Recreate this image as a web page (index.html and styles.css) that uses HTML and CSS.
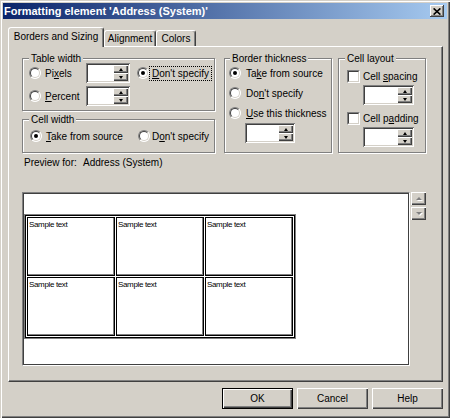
FILE: index.html
```html
<!DOCTYPE html>
<html>
<head>
<meta charset="utf-8">
<link rel="stylesheet" href="styles.css">
</head>
<body>
<div class="window">
  <div class="titlebar">
    <span class="title">Formatting element 'Address (System)'</span>
    <span class="close"><svg width="8" height="7" viewBox="0 0 8 7"><path d="M0.6 0.4 L7.4 6.6 M7.4 0.4 L0.6 6.6" stroke="#000" stroke-width="1.6" fill="none"/></svg></span>
  </div>
  <div class="tabs">
    <div class="tab active">Borders and Sizing</div>
    <div class="tab tab-align">Alignment</div>
    <div class="tab tab-colors">Colors</div>
  </div>
  <div class="panel">
    <div class="groups">
      <div class="col-left">
        <fieldset class="grp grp-tw">
          <legend class="lg6">Table width</legend>
          <div class="tw-body">
            <div class="row">
              <div class="opt w57"><span class="radio"></span><span>Pi<u>x</u>els</span></div>
              <div class="spin w44"><div class="field"></div><div class="sbs"><span class="sb up"></span><span class="sb dn"></span></div></div>
              <div class="opt opt-ds"><span class="radio on"></span><span class="focus"><u>D</u>on't specify</span></div>
            </div>
            <div class="row">
              <div class="opt w57"><span class="radio"></span><span><u>P</u>ercent</span></div>
              <div class="spin w44"><div class="field"></div><div class="sbs"><span class="sb up"></span><span class="sb dn"></span></div></div>
            </div>
          </div>
        </fieldset>
        <fieldset class="grp grp-cw">
          <legend class="lg6">Cell width</legend>
          <div class="cw-body">
            <div class="row">
              <div class="opt w108"><span class="radio on"></span><span><u>T</u>ake from source</span></div>
              <div class="opt opt-cw2"><span class="radio"></span><span>D<u>o</u>n't specify</span></div>
            </div>
          </div>
        </fieldset>
      </div>
      <fieldset class="grp grp-bt">
        <legend class="lg5">Border thickness</legend>
        <div class="bt-body">
          <div class="row"><div class="opt opt-bt"><span class="radio on"></span><span>Ta<u>k</u>e from source</span></div></div>
          <div class="row"><div class="opt opt-bt"><span class="radio"></span><span>Do<u>n</u>'t specify</span></div></div>
          <div class="row"><div class="opt opt-bt"><span class="radio"></span><span><u>U</u>se this thickness</span></div></div>
          <div class="spin w50 spin-bt"><div class="field"></div><div class="sbs"><span class="sb up"></span><span class="sb dn"></span></div></div>
        </div>
      </fieldset>
      <fieldset class="grp grp-cl">
        <legend class="lg6">Cell layout</legend>
        <div class="cl-body">
          <div class="crow"><span class="check"></span><span>Cell <u>s</u>pacing</span></div>
          <div class="spin w51 spin-cl"><div class="field"></div><div class="sbs"><span class="sb up"></span><span class="sb dn"></span></div></div>
          <div class="crow"><span class="check"></span><span>Cell p<u>a</u>dding</span></div>
          <div class="spin w51 spin-cl"><div class="field"></div><div class="sbs"><span class="sb up"></span><span class="sb dn"></span></div></div>
        </div>
      </fieldset>
    </div>
    <div class="preview-label"><span class="pl-key">Preview for:</span><span>Address (System)</span></div>
    <div class="preview-row">
      <div class="preview">
        <div class="ptable">
          <div class="pcell">Sample text</div>
          <div class="pcell">Sample text</div>
          <div class="pcell">Sample text</div>
          <div class="pcell">Sample text</div>
          <div class="pcell">Sample text</div>
          <div class="pcell">Sample text</div>
        </div>
      </div>
      <div class="scroll">
        <span class="scb"><span class="tri-up"></span></span>
        <span class="scb"><span class="tri-dn"></span></span>
      </div>
    </div>
  </div>
  <div class="buttons">
    <button class="btn btn-default">OK</button>
    <button class="btn">Cancel</button>
    <button class="btn">Help</button>
  </div>
</div>
</body>
</html>
```
FILE: styles.css
```css
* { box-sizing: border-box; }
html, body { margin: 0; padding: 0; background: #D4D0C8; }
body { font: 10px "Liberation Sans", Arial, sans-serif; color: #000; }
u { text-decoration: underline; text-underline-offset: 1px; }

.window {
  width: 450px; height: 418px; background: #D4D0C8; padding: 3px;
  display: flex; flex-direction: column;
  box-shadow: inset 1px 1px 0 #D4D0C8, inset 2px 2px 0 #fff, inset -1px -1px 0 #404040, inset -2px -2px 0 #808080;
}

.titlebar {
  height: 16px; flex: none;
  background: linear-gradient(to right, #0A246A, #A6CAF0);
  display: flex; align-items: center; justify-content: space-between;
  padding: 0 3px 0 1px;
}
.title { color: #fff; font-weight: bold; font-size: 11px; line-height: 16px; white-space: nowrap; }
.close {
  width: 14px; height: 12px; background: #D4D0C8;
  display: flex; align-items: center; justify-content: center;
  box-shadow: inset -1px -1px 0 #404040, inset 1px 1px 0 #fff, inset -2px -2px 0 #808080;
}

.tabs { display: flex; align-items: flex-end; height: 19px; margin: 8px 0 0 5px; flex: none; }
.tab {
  height: 16px; background: #D4D0C8;
  border: 1px solid; border-bottom: none;
  border-color: #fff #404040 transparent #fff;
  border-radius: 3px 3px 0 0;
  box-shadow: inset -1px 0 0 #808080;
  display: flex; align-items: center; justify-content: center;
  white-space: nowrap;
}
.tab.active { width: 96px; height: 20px; margin-bottom: -1px; position: relative; z-index: 1; padding-bottom: 2px; }
.tab-align { width: 52px; }
.tab-colors { width: 40px; }

.panel {
  margin-left: 5px; width: 435px; height: 336px; flex: none;
  border: 1px solid; border-color: #fff #404040 #404040 #fff;
  box-shadow: inset -1px -1px 0 #808080;
  padding: 7px 0 0 13px;
}

.groups { display: flex; align-items: stretch; }
.col-left { width: 193px; display: flex; flex-direction: column; gap: 4px; }

.grp {
  margin: 0; padding: 0; min-width: 0;
  border: 1px solid #808080;
  box-shadow: 1px 1px 0 #fff, inset 1px 1px 0 #fff;
}
.grp legend { padding: 0 2px; line-height: 9px; background: #D4D0C8; white-space: nowrap; }
.lg6 { margin-left: 6px; }
.lg5 { margin-left: 5px; }
.grp-bt { width: 108px; margin-left: 9px; }
.grp-cl { width: 88px; margin-left: 6px; }

.row { display: flex; align-items: center; height: 20px; }
.opt { display: flex; align-items: center; gap: 4px; white-space: nowrap; }
.w57 { width: 57px; }
.w108 { width: 108px; }
.opt-ds { margin-left: 7px; gap: 1px; }
.opt-cw2 { gap: 2px; }
.opt-bt { gap: 5px; }
.focus { outline: 1px dotted #000; outline-offset: 0; padding: 0 2px; line-height: 13px; }

.tw-body { padding: 0 0 4px 6px; display: flex; flex-direction: column; gap: 3px; }
.cw-body { padding: 2px 0 6px 7px; }
.bt-body { padding: 0 0 0 4px; }
.spin-bt { margin-left: 16px; }
.cl-body { padding: 0 0 0 8px; }
.crow { display: flex; align-items: center; gap: 3px; height: 14px; margin-top: 6px; white-space: nowrap; }
.spin-cl { margin: 2px 0 0 16px; }

.radio {
  width: 12px; height: 12px; flex: none; border-radius: 50%;
  background: #fff; position: relative;
  border: 1px solid; border-color: #808080 #fff #fff #808080;
}
.radio::before {
  content: ""; position: absolute; inset: 0; border-radius: 50%;
  border: 1px solid; border-color: #404040 #D4D0C8 #D4D0C8 #404040;
}
.radio.on::after {
  content: ""; position: absolute; left: 3px; top: 3px; width: 4px; height: 4px;
  border-radius: 50%; background: #000;
}
.check {
  width: 13px; height: 13px; flex: none; background: #fff; position: relative;
  border: 1px solid; border-color: #808080 #fff #fff #808080;
}
.check::before {
  content: ""; position: absolute; inset: 0;
  border: 1px solid; border-color: #404040 #D4D0C8 #D4D0C8 #404040;
}

.spin {
  height: 20px; display: flex; background: #fff; padding: 2px;
  box-shadow: inset 1px 1px 0 #808080, inset -1px -1px 0 #fff, inset 2px 2px 0 #404040, inset -2px -2px 0 #D4D0C8;
}
.w44 { width: 44px; }
.w50 { width: 50px; }
.w51 { width: 51px; }
.field { flex: 1; }
.sbs { width: 15px; display: flex; flex-direction: column; }
.sb {
  flex: 1; background: #D4D0C8;
  display: flex; align-items: center; justify-content: center;
  box-shadow: inset 1px 1px 0 #fff, inset -1px -1px 0 #404040, inset -2px -2px 0 #808080;
}
.sb::after { content: ""; width: 0; height: 0; border-left: 2.5px solid transparent; border-right: 2.5px solid transparent; }
.sb.up::after { border-bottom: 3px solid #000; }
.sb.dn::after { border-top: 3px solid #000; }

.preview-label { display: flex; height: 13px; line-height: 13px; margin-top: 3px; padding-left: 2px; white-space: nowrap; }
.pl-key { width: 59px; }

.preview-row { display: flex; margin-top: 23px; }
.preview {
  width: 388px; height: 174px; background: #fff; padding: 1px;
  border: 1px solid; border-color: #808080 #fff #fff #808080;
  box-shadow: inset 1px 1px 0 #404040, inset -1px -1px 0 #404040;
}
.ptable {
  display: grid; width: max-content;
  grid-template-columns: repeat(3, 88px); grid-auto-rows: 59px; gap: 1px;
  padding: 1px; margin: 21px 0 0 1px;
  border: 1px solid #000; box-shadow: 0 0 0 1px #808080;
}
.pcell {
  border: 1px solid #000; box-shadow: inset -1px -1px 0 #808080;
  font-size: 8px; line-height: 9px; letter-spacing: -0.35px;
  padding: 2px 0 0 1px; white-space: nowrap;
}

.scroll { margin-left: 1px; display: flex; flex-direction: column; gap: 2px; }
.scb {
  width: 15px; height: 13px; background: #D4D0C8;
  display: flex; align-items: center; justify-content: center;
  box-shadow: inset 1px 1px 0 #fff, inset -1px -1px 0 #404040, inset -2px -2px 0 #808080;
}
.tri-up, .tri-dn { width: 0; height: 0; border-left: 3px solid transparent; border-right: 3px solid transparent; filter: drop-shadow(1px 1px 0 #fff); }
.tri-up { border-bottom: 3px solid #808080; }
.tri-dn { border-top: 3px solid #808080; }

.buttons { display: flex; justify-content: flex-end; gap: 4px; width: 435px; margin: 6px 0 0 5px; }
.btn {
  width: 71px; height: 21px; padding: 0; margin: 0;
  font: inherit; color: #000; background: #D4D0C8; border: none;
  box-shadow: inset 1px 1px 0 #fff, inset -1px -1px 0 #404040, inset -2px -2px 0 #808080;
}
.btn-default {
  border: 1px solid #000;
}
```
